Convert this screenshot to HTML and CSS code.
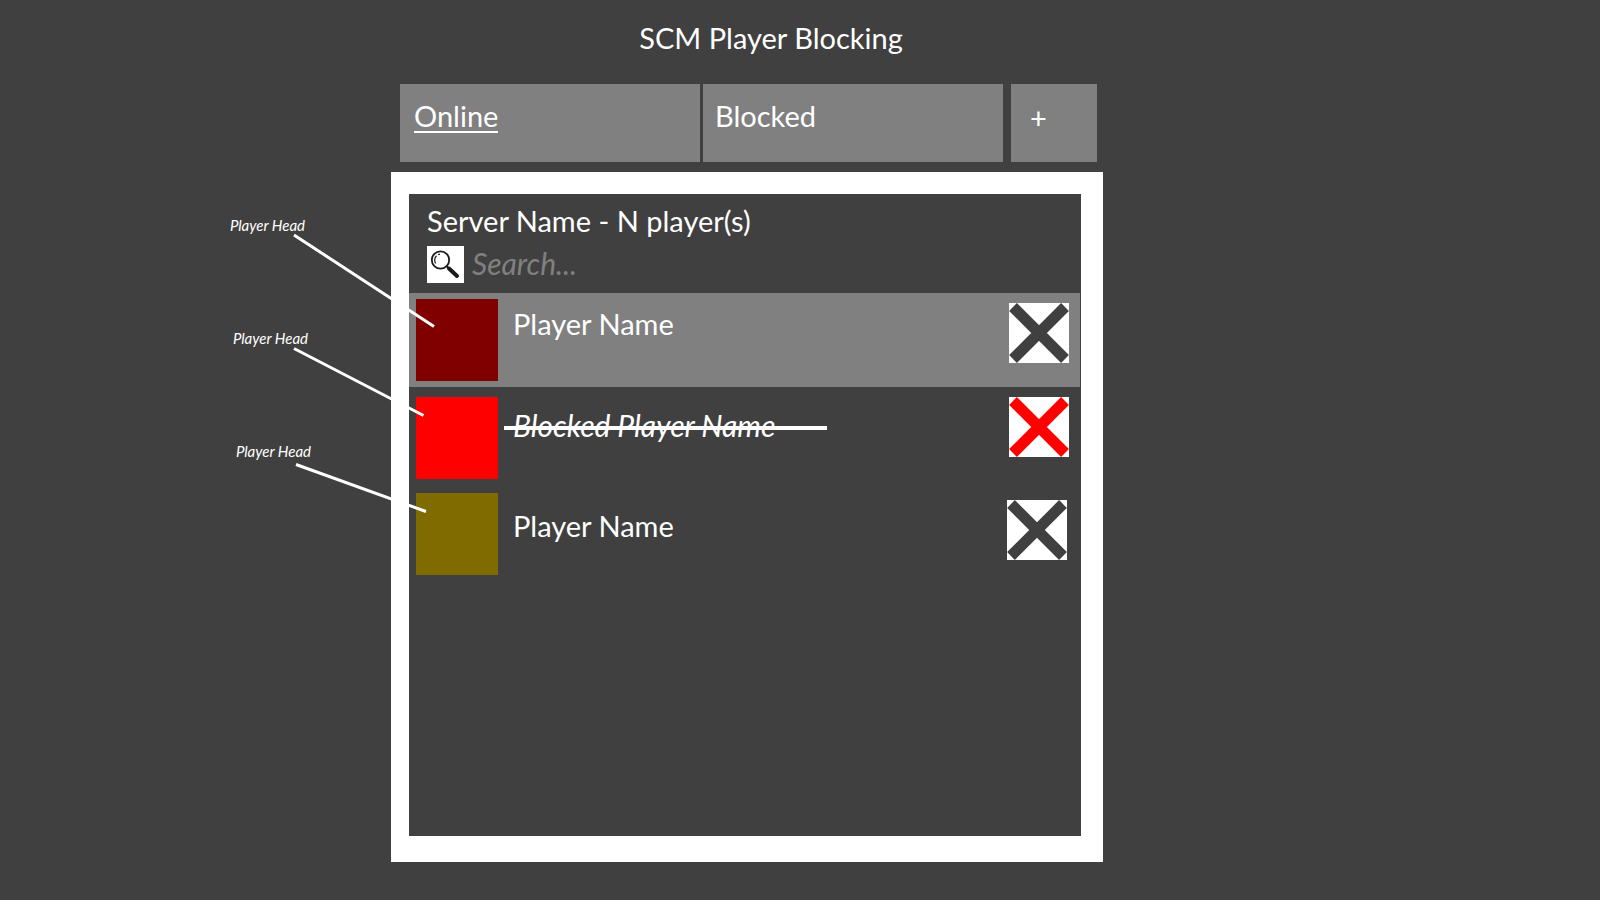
FILE: index.html
```html
<!DOCTYPE html>
<html lang="en">
<head>
<meta charset="utf-8">
<meta name="viewport" content="width=device-width, initial-scale=1">
<title>SCM Player Blocking</title>
<link rel="stylesheet" href="styles.css">
</head>
<body>
<div class="page">
  <aside class="notes">
    <p class="note note-first">Player Head</p>
    <p class="note note-second">Player Head</p>
    <p class="note note-third">Player Head</p>
    <svg class="pointers" width="144" height="284" viewBox="292 232 144 284" aria-hidden="true">
      <path d="M294 235 434 326.500M294 348.500 423.500 415.500M296 464.500 426 511.500" fill="none" stroke="#fff" stroke-width="3"/>
    </svg>
  </aside>
  <main class="app">
    <h1 class="title">SCM Player Blocking</h1>
    <nav class="tabs">
      <button class="tab tab-active" type="button"><span class="tab-label">Online</span></button>
      <button class="tab" type="button">Blocked</button>
      <button class="tab tab-add" type="button">+</button>
    </nav>
    <section class="panel">
      <header class="panel-head">
        <h2 class="server">Server Name - N player(s)</h2>
        <div class="search">
          <label class="search-icon" for="search" aria-label="Search players">
            <svg width="37" height="37" viewBox="0 0 37 37" aria-hidden="true">
              <circle cx="13.500" cy="14" r="8.700" fill="none" stroke="#1a1a1a" stroke-width="1.800"/>
              <path d="M8.500 17.500Q6.500 12.500 9.500 9.800M11 8.600 13 8" fill="none" stroke="#1a1a1a" stroke-width="1.200"/>
              <path d="M19.500 20 22 22.500" stroke="#1a1a1a" stroke-width="2"/>
              <path d="M22 22.500 30 30" stroke="#1a1a1a" stroke-width="4" stroke-linecap="round"/>
            </svg>
          </label>
          <input class="search-input" id="search" type="text" placeholder="Search...">
        </div>
      </header>
      <ul class="players">
        <li class="player player-selected">
          <span class="head head-maroon"></span>
          <span class="name">Player Name</span>
          <button class="block" type="button" aria-label="Block player">
            <svg class="cross" viewBox="0 0 60 60"><path d="M4 4 56 56M56 4 4 56"/></svg>
          </button>
        </li>
        <li class="player player-blocked">
          <span class="head head-red"></span>
          <span class="name name-blocked">Blocked Player Name</span>
          <button class="block block-on" type="button" aria-label="Unblock player">
            <svg class="cross" viewBox="0 0 60 60"><path d="M4 4 56 56M56 4 4 56"/></svg>
          </button>
        </li>
        <li class="player player-last">
          <span class="head head-olive"></span>
          <span class="name">Player Name</span>
          <button class="block" type="button" aria-label="Block player">
            <svg class="cross" viewBox="0 0 60 60"><path d="M4 4 56 56M56 4 4 56"/></svg>
          </button>
        </li>
      </ul>
    </section>
  </main>
</div>
</body>
</html>
```
FILE: styles.css
```css
* { box-sizing: border-box; }

body {
  margin: 0;
  background: #404040;
  color: #fff;
  font: 29px/34px Lato, sans-serif;
}

h1, h2, p, ul { margin: 0; padding: 0; font-weight: 400; font-size: inherit; }
ul { list-style: none; }
button, input { font: inherit; color: inherit; border: 0; border-radius: 0; margin: 0; }

.page {
  display: grid;
  grid-template-columns: 391fr 712fr 497fr;
  min-height: 100vh;
}

/* Callouts beside the panel */
.notes {
  position: relative;
  display: flex;
  flex-direction: column;
  align-items: flex-end;
  gap: 94px;
  padding: 216px 86px 0 0;
  font-size: 15px;
  line-height: 19px;
  font-style: italic;
}
.note-second { margin-right: -3px; }
.note-third { margin-right: -6px; }
.pointers { position: absolute; top: 232px; right: -45px; }

.app { display: flex; flex-direction: column; padding: 21px 0 38px; }
.title { padding-left: 48px; text-align: center; }

.tabs {
  display: grid;
  grid-template-columns: 300fr 300fr 91fr;
  gap: 3px;
  padding: 29px 6px 10px 9px;
}
.tab {
  height: 78px;
  padding: 15px 12px;
  display: flex;
  align-items: flex-start;
  background: #808080;
  text-align: left;
}
.tab-active { padding-left: 14px; }
.tab-label { height: 34px; border-bottom: 2px solid #fff; }
.tab-add { margin-left: 5px; padding: 17px 19px; }

.panel {
  flex: 1;
  border: solid #fff;
  border-width: 22px 22px 26px 18px;
}
.panel-head { padding: 10px 18px; }
.search { display: flex; align-items: center; gap: 8px; margin-top: 8px; }
.search-icon { display: block; width: 37px; height: 37px; background: #fff; }
.search-icon svg { display: block; }
.search-input {
  flex: 1;
  min-width: 0;
  height: 37px;
  padding: 0 0 4px;
  background: none;
  font-size: 30px;
  font-style: italic;
  outline: none;
}
.search-input::placeholder { color: #808080; opacity: 1; }

.player {
  display: flex;
  align-items: flex-start;
  margin-right: 1px;
  padding: 6px 11px 6px 7px;
}
.player-selected { background: #808080; }
.player-blocked { margin-top: 4px; }
.player-last { margin-top: 2px; padding-right: 13px; }

.head { flex: none; width: 82px; height: 82px; }
.head-maroon { background: #800000; }
.head-red { background: #f00; }
.head-olive { background: #806b00; }

.name { margin: 8px auto 0 15px; }
.name-blocked { position: relative; margin-top: 11px; font-size: 30px; font-style: italic; }
.name-blocked::after {
  content: "";
  position: absolute;
  left: -9px;
  top: 18px;
  width: 323px;
  height: 4px;
  background: #fff;
}
.player-last .name { margin-top: 16px; }

.block {
  flex: none;
  width: 60px;
  height: 60px;
  padding: 0;
  background: #fff;
  color: #404040;
}
.block-on { color: #f00; }
.player-selected .block { margin-top: 4px; }
.player-last .block { margin-top: 7px; }
.cross { display: block; fill: none; stroke: currentColor; stroke-width: 11; }
```
